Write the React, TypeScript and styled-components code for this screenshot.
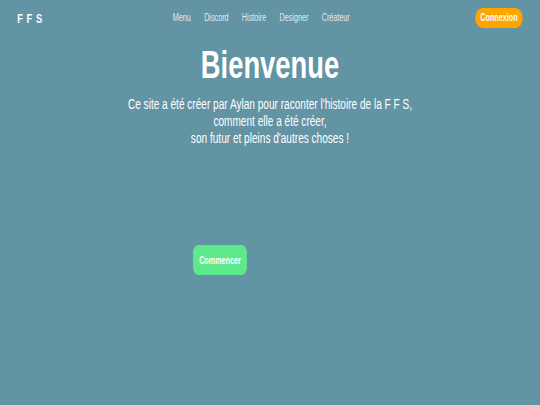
import styled, { createGlobalStyle } from "styled-components";

const Global = createGlobalStyle`
  html, body {
    margin: 0;
    padding: 0;
    background: #6294a4;
    overflow: hidden;
  }
  body {
    font-family: "Liberation Sans", Arial, sans-serif;
  }
`;

// the page is laid out on a 750px wide canvas and squeezed to 540px,
// which gives the narrow look of the text in the reference
const App = () => {
  return (
    <Page>
      <Global />
      <Header>
        <Logo>FFS</Logo>
        <Nav>
          <NavLink>Menu</NavLink>
          <NavLink>Discord</NavLink>
          <NavLink>Histoire</NavLink>
          <NavLink>Designer</NavLink>
          <NavLink>Créateur</NavLink>
        </Nav>
        <Login>Connexion</Login>
      </Header>
      <Hero>
        <Title>Bienvenue</Title>
        <Intro>
          Ce site a été créer par Aylan pour raconter l'histoire de la F F S,
          <br />
          comment elle a été créer,
          <br />
          son futur et pleins d'autres choses !
        </Intro>
      </Hero>
      <Actions>
        <Start>Commencer</Start>
      </Actions>
    </Page>
  );
};

export default App;

const Page = styled.div`
  width: 750px;
  height: 405px;
  background: #6294a4;
  transform: scaleX(0.72);
  transform-origin: top left;
`;

const Header = styled.div`
  height: 35px;
  display: flex;
  align-items: center;
  padding: 0 24px;
  box-sizing: border-box;
`;

const Logo = styled.div`
  width: 216px;
  color: #ffffff;
  font-weight: bold;
  font-size: 13px;
  letter-spacing: 5px;
  padding-top: 1px;
`;

const Nav = styled.div`
  display: flex;
  gap: 18.5px;
  flex: 1;
`;

const NavLink = styled.a`
  color: #e2eaed;
  font-size: 10px;
  cursor: pointer;
`;

const Login = styled.button`
  height: 20px;
  width: 66px;
  border: none;
  border-radius: 10px;
  background: #ffa500;
  color: #ffffff;
  font-family: inherit;
  font-weight: bold;
  font-size: 10px;
  padding: 0;
`;

const Hero = styled.div`
  display: flex;
  flex-direction: column;
  align-items: center;
  text-align: center;
  color: #ffffff;
`;

const Title = styled.h1`
  margin: 5px 0 0;
  font-size: 38px;
  font-weight: bold;
  line-height: 50px;
`;

const Intro = styled.p`
  margin: 6px 0 0;
  font-size: 14px;
  line-height: 17px;
`;

const Actions = styled.div`
  padding: 98px 0 0 268px;
`;

const Start = styled.button`
  width: 75px;
  height: 30px;
  border: none;
  border-radius: 8px;
  background: #5eea8a;
  color: #ffffff;
  font-family: inherit;
  font-weight: bold;
  font-size: 10px;
  padding: 0;
`;
